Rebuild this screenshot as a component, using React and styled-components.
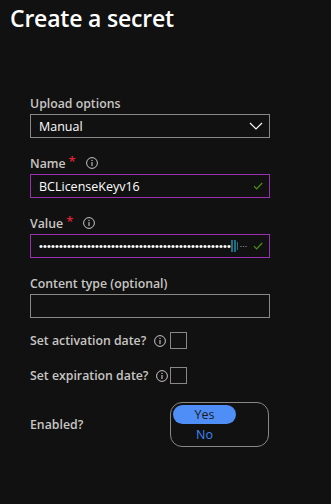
import React from "react"
import styled, { createGlobalStyle } from "styled-components"

const GlobalStyle = createGlobalStyle`
  html, body {
    margin: 0;
    padding: 0;
    background: #111111;
  }
  body {
    font-family: "Open Sans", "Noto Sans", "Liberation Sans", sans-serif;
    color: #ffffff;
  }
`

const Page = styled.div`
  width: 331px;
  height: 504px;
  background: #111111;
  overflow: hidden;
`

const Title = styled.h1`
  margin: 0;
  padding: 2px 0 0 10px;
  font-size: 23px;
  line-height: 32px;
  font-weight: 600;
  letter-spacing: -0.2px;
  color: #ffffff;
`

const Form = styled.div`
  display: flex;
  flex-direction: column;
  gap: 15px;
  width: 240px;
  padding: 59px 0 0 30px;
`

const Field = styled.div`
  display: flex;
  flex-direction: column;
  gap: 1px;
`

const Label = styled.div`
  display: flex;
  align-items: center;
  height: 20px;
  font-size: 12.3px;
  font-weight: 600;
  color: #c8c6c4;
  white-space: nowrap;
`

const Required = styled.span`
  color: #e0213a;
  margin-left: 3px;
  font-size: 13px;
  align-self: flex-start;
  line-height: 16px;
`

const InfoWrap = styled.span`
  display: inline-flex;
  margin-left: ${p => p.$gap || 8}px;
`

const Box = styled.div`
  box-sizing: border-box;
  height: 24px;
  display: flex;
  align-items: center;
  padding: 0 6px 0 8px;
  border: 1px solid ${p => (p.$active ? "#9a2fb3" : "#8a8886")};
  font-size: 12.5px;
  color: #ffffff;
`

const BoxText = styled.span`
  flex: 1;
  display: flex;
  align-items: center;
  white-space: nowrap;
  overflow: hidden;
`

const Dots = styled.span`
  font-family: "Liberation Sans", sans-serif;
  font-size: 11px;
  letter-spacing: 0.15px;
  line-height: 12px;
  white-space: nowrap;
`

const Caret = styled.span`
  display: inline-block;
  width: ${p => p.$w}px;
  height: ${p => p.$h}px;
  margin-right: 1px;
  background: #1b6f86;
`

const Tail = styled.span`
  font-family: "Liberation Sans", sans-serif;
  font-size: 7px;
  letter-spacing: 0.5px;
  color: #e8e8e8;
  margin-left: 1px;
  align-self: flex-end;
  margin-bottom: 4px;
`

const ControlRow = styled.div`
  display: flex;
  align-items: center;
  height: 17px;
`

const RowLabel = styled.div`
  width: 140px;
  display: flex;
  align-items: center;
  font-size: 12.3px;
  font-weight: 600;
  color: #c8c6c4;
  white-space: nowrap;
`

const Checkbox = styled.div`
  box-sizing: border-box;
  width: 17px;
  height: 17px;
  border: 1px solid #8a8886;
`

const Rows = styled.div`
  display: flex;
  flex-direction: column;
  padding: 14px 0 0 30px;
  gap: 18px;
`

const Toggle = styled.div`
  box-sizing: border-box;
  width: 99px;
  height: 45px;
  border: 1px solid #8a8886;
  border-radius: 12px;
  padding: 2px;
  display: flex;
  flex-direction: column;
`

const Option = styled.div`
  width: 63px;
  height: 19px;
  border-radius: 10px;
  display: flex;
  align-items: center;
  justify-content: center;
  font-size: 12.5px;
  background: ${p => (p.$selected ? "#4f8ef7" : "transparent")};
  color: ${p => (p.$selected ? "#1b1a19" : "#3b87f7")};
  margin-top: ${p => (p.$selected ? 0 : 1)}px;
`

const EnabledRow = styled.div`
  display: flex;
  align-items: center;
`

function InfoIcon() {
  return (
    <svg width="12" height="12" viewBox="0 0 12 12">
      <circle cx="6" cy="6" r="5.4" fill="none" stroke="#c8c6c4" strokeWidth="1" />
      <rect x="5.45" y="5" width="1.1" height="4" fill="#c8c6c4" />
      <circle cx="6" cy="3.4" r="0.7" fill="#c8c6c4" />
    </svg>
  )
}

function Chevron() {
  return (
    <svg width="14" height="8" viewBox="0 0 14 8">
      <path d="M1 1 L7 7 L13 1" fill="none" stroke="#ffffff" strokeWidth="1.1" />
    </svg>
  )
}

function Check() {
  return (
    <svg width="10" height="8" viewBox="0 0 10 8">
      <path d="M1 4.2 L3.6 6.8 L9.2 1" fill="none" stroke="#4f8f1c" strokeWidth="1.2" />
    </svg>
  )
}

export default function App() {
  return (
    <Page>
      <GlobalStyle />
      <Title>Create a secret</Title>

      <Form>
        <Field>
          <Label>Upload options</Label>
          <Box>
            <BoxText>Manual</BoxText>
            <Chevron />
          </Box>
        </Field>

        <Field>
          <Label>
            Name<Required>*</Required>
            <InfoWrap $gap={10}><InfoIcon /></InfoWrap>
          </Label>
          <Box $active>
            <BoxText>BCLicenseKeyv16</BoxText>
            <Check />
          </Box>
        </Field>

        <Field>
          <Label>
            Value<Required>*</Required>
            <InfoWrap $gap={10}><InfoIcon /></InfoWrap>
          </Label>
          <Box $active>
            <BoxText>
              <Dots>{"•".repeat(48)}</Dots>
              <Caret $w={2} $h={12} />
              <Caret $w={2} $h={12} />
              <Caret $w={1} $h={8} />
              <Tail>...</Tail>
            </BoxText>
            <Check />
          </Box>
        </Field>

        <Field>
          <Label>Content type (optional)</Label>
          <Box />
        </Field>
      </Form>

      <Rows>
        <ControlRow>
          <RowLabel>
            Set activation date?
            <InfoWrap $gap={8}><InfoIcon /></InfoWrap>
          </RowLabel>
          <Checkbox />
        </ControlRow>

        <ControlRow>
          <RowLabel>
            Set expiration date?
            <InfoWrap $gap={8}><InfoIcon /></InfoWrap>
          </RowLabel>
          <Checkbox />
        </ControlRow>

        <EnabledRow>
          <RowLabel>Enabled?</RowLabel>
          <Toggle>
            <Option $selected>Yes</Option>
            <Option>No</Option>
          </Toggle>
        </EnabledRow>
      </Rows>
    </Page>
  )
}
